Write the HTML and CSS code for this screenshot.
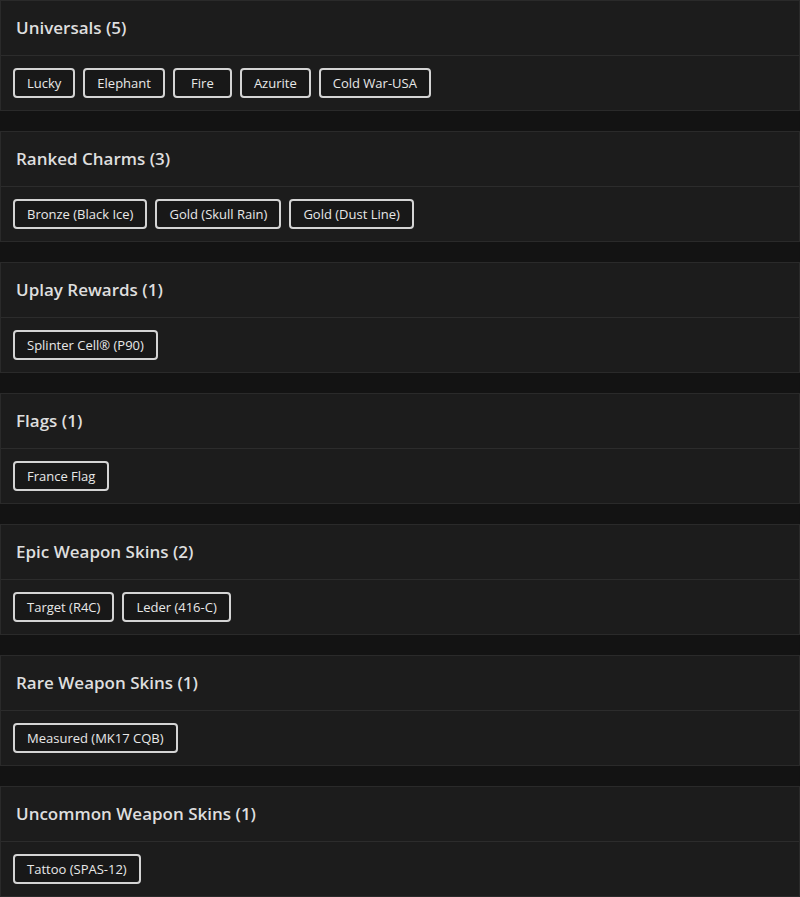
FILE: index.html
```html
<!DOCTYPE html>
<html>
<head>
<meta charset="utf-8">
<link rel="stylesheet" href="styles.css">
</head>
<body>
<div class="list">
  <section class="card">
    <div class="card-head">Universals (5)</div>
    <div class="card-body">
      <span class="tag">Lucky</span><span class="tag">Elephant</span><span class="tag">Fire</span><span class="tag">Azurite</span><span class="tag">Cold War-USA</span>
    </div>
  </section>
  <section class="card">
    <div class="card-head">Ranked Charms (3)</div>
    <div class="card-body">
      <span class="tag">Bronze (Black Ice)</span><span class="tag">Gold (Skull Rain)</span><span class="tag">Gold (Dust Line)</span>
    </div>
  </section>
  <section class="card">
    <div class="card-head">Uplay Rewards (1)</div>
    <div class="card-body">
      <span class="tag">Splinter Cell® (P90)</span>
    </div>
  </section>
  <section class="card">
    <div class="card-head">Flags (1)</div>
    <div class="card-body">
      <span class="tag">France Flag</span>
    </div>
  </section>
  <section class="card">
    <div class="card-head">Epic Weapon Skins (2)</div>
    <div class="card-body">
      <span class="tag">Target (R4C)</span><span class="tag">Leder (416-C)</span>
    </div>
  </section>
  <section class="card">
    <div class="card-head">Rare Weapon Skins (1)</div>
    <div class="card-body">
      <span class="tag">Measured (MK17 CQB)</span>
    </div>
  </section>
  <section class="card">
    <div class="card-head">Uncommon Weapon Skins (1)</div>
    <div class="card-body">
      <span class="tag">Tattoo (SPAS-12)</span>
    </div>
  </section>
</div>
</body>
</html>
```
FILE: styles.css
```css
html, body {
  margin: 0;
  padding: 0;
  background: #131313;
}
body {
  font-family: "Open Sans", "DejaVu Sans", sans-serif;
  color: #e2e2e2;
}
.list {
  display: flex;
  flex-direction: column;
  gap: 20px;
}
.card {
  background: #1c1c1c;
  border: 1px solid #2a2a2a;
}
.card-head {
  box-sizing: border-box;
  height: 55px;
  display: flex;
  align-items: center;
  padding: 0 15px 2px;
  font-size: 17px;
  font-weight: 600;
  color: #dedede;
  border-bottom: 1px solid #2c2c2c;
}
.card-body {
  display: flex;
  flex-wrap: wrap;
  gap: 8px;
  padding: 12px 12px;
}
.tag {
  box-sizing: border-box;
  height: 30px;
  min-width: 59px;
  padding: 0 12px;
  display: inline-flex;
  align-items: center;
  justify-content: center;
  border: 2px solid #d4d4d4;
  border-radius: 4px;
  font-size: 13px;
  color: #e8e8e8;
  background: #181818;
}
```
